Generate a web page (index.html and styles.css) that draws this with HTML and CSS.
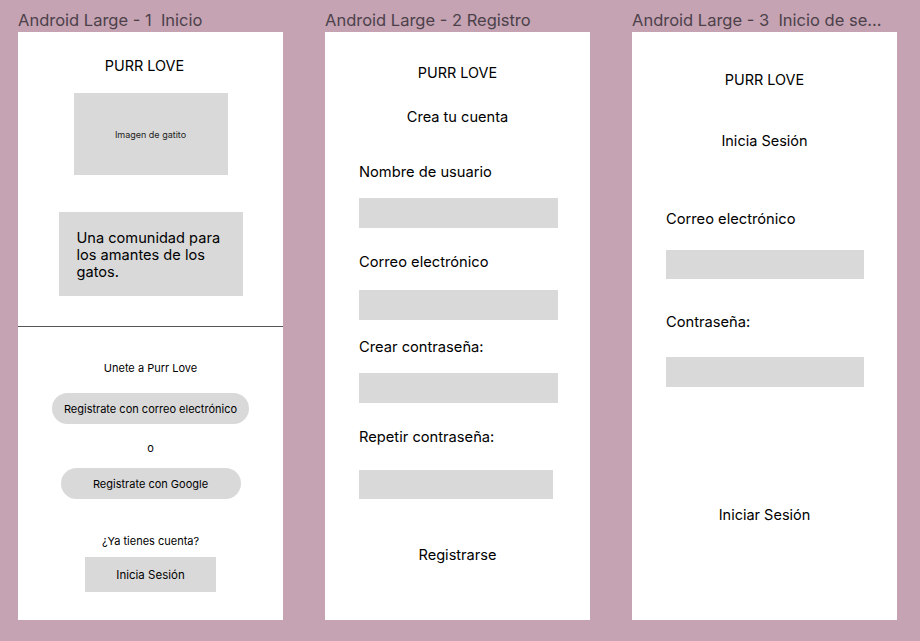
FILE: index.html
```html
<!DOCTYPE html>
<html lang="es">
<head>
<meta charset="utf-8">
<title>Purr Love</title>
<link rel="stylesheet" href="styles.css">
</head>
<body>
<div class="canvas">
  <section class="screen">
    <div class="screen-label">Android Large - 1  Inicio</div>
    <div class="frame f1">
      <div class="brand f1-brand">PURR LOVE</div>
      <div class="img-box">Imagen de gatito</div>
      <div class="tagline">Una comunidad para los amantes de los gatos.</div>
      <div class="divider"></div>
      <div class="join">Unete a Purr Love</div>
      <div class="pill pill-mail">Registrate con correo electrónico</div>
      <div class="or">o</div>
      <div class="pill pill-google">Registrate con Google</div>
      <div class="question">¿Ya tienes cuenta?</div>
      <div class="login-btn">Inicia Sesión</div>
    </div>
  </section>

  <section class="screen">
    <div class="screen-label">Android Large - 2 Registro</div>
    <div class="frame f2">
      <div class="brand">PURR LOVE</div>
      <div class="subtitle f2-sub">Crea tu cuenta</div>
      <div class="field-label f2-l1">Nombre de usuario</div>
      <div class="input f2-i1"></div>
      <div class="field-label f2-l2">Correo electrónico</div>
      <div class="input f2-i2"></div>
      <div class="field-label f2-l3">Crear contraseña:</div>
      <div class="input f2-i3"></div>
      <div class="field-label f2-l4">Repetir contraseña:</div>
      <div class="input f2-i4"></div>
      <div class="action f2-act">Registrarse</div>
    </div>
  </section>

  <section class="screen">
    <div class="screen-label">Android Large - 3  Inicio de se...</div>
    <div class="frame f3">
      <div class="brand">PURR LOVE</div>
      <div class="subtitle f3-sub">Inicia Sesión</div>
      <div class="field-label f3-l1">Correo electrónico</div>
      <div class="input f3-i1"></div>
      <div class="field-label f3-l2">Contraseña:</div>
      <div class="input f3-i2"></div>
      <div class="action f3-act">Iniciar Sesión</div>
    </div>
  </section>
</div>
</body>
</html>
```

FILE: styles.css
```css
* { box-sizing: border-box; }

html, body {
  margin: 0;
  padding: 0;
}

body {
  background: #c5a3b3;
  font-family: Inter, "Noto Sans", "Liberation Sans", sans-serif;
  color: #000;
  width: 920px;
  height: 641px;
  overflow: hidden;
}

.canvas {
  display: flex;
  gap: 42px;
  padding-left: 18px;
}

.screen {
  width: 265px;
  display: flex;
  flex-direction: column;
}

.screen-label {
  height: 32px;
  padding-top: 10px;
  font-size: 16.5px;
  line-height: 20px;
  color: #4c414a;
  white-space: pre;
  overflow: hidden;
}

.frame {
  background: #fff;
  height: 588px;
  display: flex;
  flex-direction: column;
  align-items: center;
}

.brand {
  font-size: 14.4px;
  line-height: 20px;
}

/* Screen 1 */
.f1 { padding-top: 24px; }
.f1-brand { margin-right: 12px; }

.img-box {
  width: 154px;
  height: 82px;
  margin-top: 17px;
  background: #d9d9d9;
  display: flex;
  align-items: center;
  justify-content: center;
  font-size: 9px;
  color: #222;
}

.tagline {
  width: 184px;
  margin-top: 37px;
  padding: 17.5px 18px 15.5px;
  background: #d9d9d9;
  font-size: 14.6px;
  line-height: 17px;
}

.divider {
  align-self: stretch;
  height: 1px;
  margin-top: 30px;
  background: #555;
}

.join, .or, .question {
  font-size: 11px;
  line-height: 16px;
}

.join { margin-top: 33px; }
.or { margin-top: 16px; }
.question { margin-top: 34px; }

.pill {
  height: 31px;
  border-radius: 16px;
  background: #d9d9d9;
  display: flex;
  align-items: center;
  justify-content: center;
  font-size: 11px;
}

.pill-mail { width: 197px; margin-top: 17px; }
.pill-google { width: 180px; margin-top: 12px; }

.login-btn {
  width: 131px;
  height: 35px;
  margin-top: 8px;
  background: #d9d9d9;
  display: flex;
  align-items: center;
  justify-content: center;
  font-size: 11.5px;
}

/* Screens 2 and 3 */
.subtitle {
  font-size: 14.6px;
  line-height: 20px;
}

.field-label {
  align-self: flex-start;
  margin-left: 34px;
  font-size: 14.7px;
  line-height: 20px;
}

.input {
  align-self: flex-start;
  margin-left: 34px;
  width: 199px;
  height: 30px;
  background: #d9d9d9;
}

.action {
  font-size: 14.6px;
  line-height: 20px;
}

.f2 { padding-top: 31px; }
.f2-sub { margin-top: 24px; }
.f2-l1 { margin-top: 35px; }
.f2-i1 { margin-top: 16px; }
.f2-l2 { margin-top: 24px; }
.f2-i2 { margin-top: 18px; }
.f2-l3 { margin-top: 17px; }
.f2-i3 { margin-top: 16px; }
.f2-l4 { margin-top: 24px; }
.f2-i4 { margin-top: 23px; width: 194px; height: 29px; }
.f2-act { margin-top: 46px; }

.f3 { padding-top: 38px; }
.f3-sub { margin-top: 41px; font-size: 14.5px; }
.f3-l1 { margin-top: 58px; }
.f3-i1 { margin-top: 21px; width: 198px; height: 29px; }
.f3-l2 { margin-top: 33px; }
.f3-i2 { margin-top: 25px; width: 198px; }
.f3-act { margin-top: 118px; font-size: 14.5px; }
```
